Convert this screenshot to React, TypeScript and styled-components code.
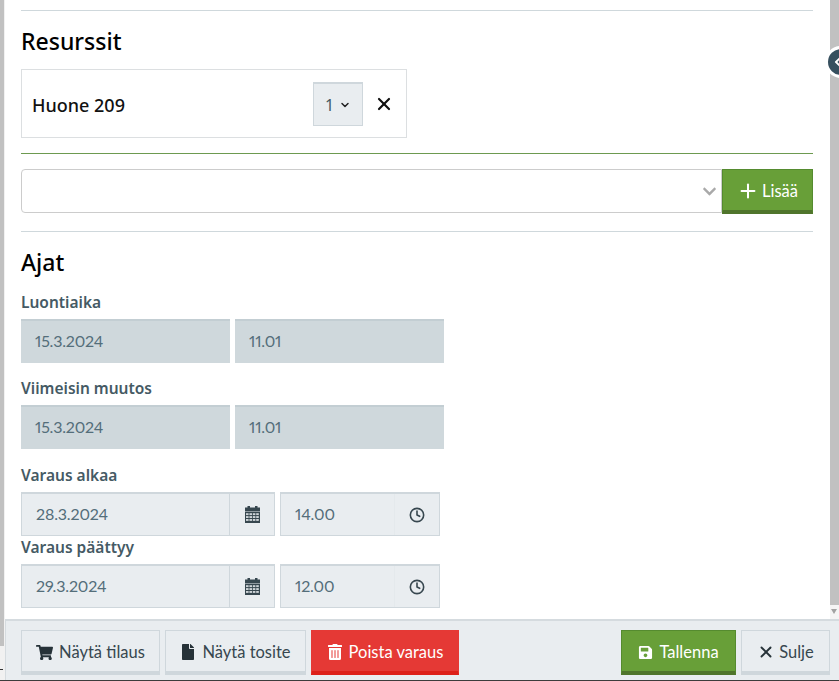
import React from 'react'
import styled, { createGlobalStyle } from 'styled-components'
import { FaShoppingCart, FaFile, FaTrashAlt, FaSave, FaChevronDown, FaChevronLeft } from 'react-icons/fa'
import { FiClock, FiX, FiPlus, FiChevronDown } from 'react-icons/fi'

const GlobalStyles = createGlobalStyle`
  html, body {
    margin: 0;
    padding: 0;
    height: 100%;
    overflow: hidden;
    background: #fff;
    font-family: "Noto Sans", "Open Sans", sans-serif;
  }
  #root { height: 100%; }
`

type Variant = 'default' | 'green' | 'red'

const variantColors = {
  default: { bg: '#e9edf0', border: '#cfd7dc', bottom: '#cfd7dc', text: '#37474f' },
  green: { bg: '#689f38', border: '#558b2f', bottom: '#50752c', text: '#fff' },
  red: { bg: '#e53935', border: '#e53935', bottom: '#dd2019', text: '#fff' },
}

function CalendarIcon() {
  const cells = []
  for (let row = 0; row < 3; row++) {
    for (let col = 0; col < 4; col++) {
      cells.push(<rect key={`${row}-${col}`} x={1 + col * 3.4} y={7.2 + row * 2.9} width={2.6} height={1.9} fill="#e9edf0" opacity={0.85} />)
    }
  }
  return (
    <svg width="15" height="17" viewBox="0 0 15 17" fill="#37474f">
      <rect x="2.5" y="0" width="2.5" height="3" />
      <rect x="10" y="0" width="2.5" height="3" />
      <rect x="0" y="1.5" width="15" height="4" />
      <rect x="0" y="6" width="15" height="11" />
      {cells}
    </svg>
  )
}

function DateTimeRow({ date, time }: { date: string; time: string }) {
  return (
    <FieldRow>
      <DateGroup>
        <EditValue>{date}</EditValue>
        <Addon $w={45}>
          <CalendarIcon />
        </Addon>
      </DateGroup>
      <TimeGroup>
        <EditValue>{time}</EditValue>
        <Addon $w={45} $plain>
          <FiClock size={16} strokeWidth={2.4} />
        </Addon>
      </TimeGroup>
    </FieldRow>
  )
}

export default function App(): JSX.Element {
  return (
    <Page>
      <GlobalStyles />
      <LeftEdge>
        <LeftThumb />
        <LeftMark />
      </LeftEdge>
      <Main>
        <Content>
          <Rule />
          <Heading $h={58}>Resurssit</Heading>
          <ResourceCard>
            <ResourceName>Huone 209</ResourceName>
            <QtyBox>
              1 <FiChevronDown size={12} strokeWidth={3} />
            </QtyBox>
            <RemoveIcon>
              <FiX size={20} strokeWidth={2.6} />
            </RemoveIcon>
          </ResourceCard>
          <Rule $green />
          <AddRow>
            <SelectBox>
              <FaChevronDown size={15} color="#a9a9a9" />
            </SelectBox>
            <Button $variant="green" $width={91} $gap={3}>
              <FiPlus size={22} strokeWidth={2.2} />
              Lisää
            </Button>
          </AddRow>
          <Rule />
          <Heading $h={62}>Ajat</Heading>
          <Label>Luontiaika</Label>
          <FieldRow>
            <ReadOnly>15.3.2024</ReadOnly>
            <ReadOnly>11.01</ReadOnly>
          </FieldRow>
          <Label $top={17}>Viimeisin muutos</Label>
          <FieldRow>
            <ReadOnly>15.3.2024</ReadOnly>
            <ReadOnly>11.01</ReadOnly>
          </FieldRow>
          <Label $top={18}>Varaus alkaa</Label>
          <DateTimeRow date="28.3.2024" time="14.00" />
          <Label $top={3}>Varaus päättyy</Label>
          <DateTimeRow date="29.3.2024" time="12.00" />
        </Content>
        <Footer>
          <Button $width={139}>
            <FaShoppingCart size={17} color="#263238" />
            Näytä tilaus
          </Button>
          <Button $width={141}>
            <FaFile size={16} color="#263238" />
            Näytä tosite
          </Button>
          <Button $variant="red" $width={148}>
            <FaTrashAlt size={16} />
            Poista varaus
          </Button>
          <FooterSpacer />
          <Button $variant="green" $width={115}>
            <FaSave size={15} />
            Tallenna
          </Button>
          <Button $width={89} $gap={4}>
            <FiX size={18} strokeWidth={2.5} color="#263238" />
            Sulje
          </Button>
        </Footer>
      </Main>
      <Scrollbar>
        <ScrollThumb />
        <ScrollArrow />
      </Scrollbar>
      <CollapseHandle>
        <FaChevronLeft size={12} color="#fff" />
      </CollapseHandle>
      <BottomLine />
    </Page>
  )
}

const Page = styled.div`
  position: relative;
  height: 681px;
  width: 839px;
  overflow: hidden;
  display: flex;
  background: #fff;
`

const LeftEdge = styled.div`
  width: 5px;
  flex: none;
  background: #f1f1f1;
  display: flex;
  flex-direction: column;
`

const LeftThumb = styled.div`
  width: 4px;
  height: 646px;
  background: #c1c1c1;
`

const LeftMark = styled.div`
  width: 3px;
  height: 1px;
  margin-top: 23px;
  background: #333;
`

const Main = styled.div`
  flex: 1;
  min-width: 0;
  display: flex;
  flex-direction: column;
  position: relative;
`

const Content = styled.div`
  flex: 1;
  padding: 10px 12px 0 16px;
`

const Rule = styled.div<{ $green?: boolean }>`
  height: 1px;
  width: 792px;
  background: ${({ $green }) => ($green ? '#6d9a50' : '#cfd8dc')};
`

const Heading = styled.h2<{ $h: number }>`
  margin: 0;
  box-sizing: border-box;
  height: ${({ $h }) => $h}px;
  padding-top: 15px;
  font-size: 23px;
  line-height: 30px;
  font-weight: 500;
  color: #000;
`

const ResourceCard = styled.div`
  box-sizing: border-box;
  width: 386px;
  height: 69px;
  border: 1px solid #dcdfe1;
  display: flex;
  align-items: center;
  padding: 1px 12px 0 10px;
  margin-bottom: 15px;
`

const ResourceName = styled.div`
  flex: 1;
  padding-top: 2px;
  font-size: 18px;
  font-weight: 500;
  color: #111;
`

const QtyBox = styled.div`
  box-sizing: border-box;
  width: 50px;
  height: 44px;
  background: #e9edf0;
  border: 1px solid #cfd7dc;
  border-top-width: 2px;
  display: flex;
  align-items: center;
  justify-content: center;
  gap: 5px;
  font-size: 16px;
  color: #455a64;
  margin-right: 11px;

  svg { color: #222; }
`

const RemoveIcon = styled.div`
  display: flex;
  color: #111;
`

const AddRow = styled.div`
  display: flex;
  width: 792px;
  margin-top: 15px;
  margin-bottom: 17px;
`

const SelectBox = styled.div`
  box-sizing: border-box;
  flex: 1;
  height: 44px;
  border: 1px solid #ccc;
  border-radius: 4px 0 0 4px;
  display: flex;
  align-items: center;
  justify-content: flex-end;
  padding-right: 4px;
`

const Button = styled.div<{ $variant?: Variant; $width: number; $gap?: number }>`
  box-sizing: border-box;
  width: ${({ $width }) => $width}px;
  height: 45px;
  flex: none;
  display: flex;
  align-items: center;
  justify-content: center;
  gap: ${({ $gap = 6 }) => $gap}px;
  padding-top: 2px;
  font-family: "Lato", "Noto Sans", sans-serif;
  font-size: 16.5px;
  color: ${({ $variant = 'default' }) => variantColors[$variant].text};
  background: ${({ $variant = 'default' }) => variantColors[$variant].bg};
  border: 1px solid ${({ $variant = 'default' }) => variantColors[$variant].border};
  border-bottom: 4px solid ${({ $variant = 'default' }) => variantColors[$variant].bottom};
`

const Label = styled.div<{ $top?: number }>`
  font-size: 15.5px;
  line-height: 17px;
  font-weight: 600;
  color: #455a64;
  margin-top: ${({ $top = 0 }) => $top}px;
  margin-bottom: 8px;
`

const FieldRow = styled.div`
  display: flex;
  gap: 5px;
  height: 44px;
`

const ReadOnly = styled.div`
  box-sizing: border-box;
  width: 209px;
  height: 44px;
  padding: 0 0 3px 14px;
  background: #cfd8dc;
  border-top: 2px solid #c3ced3;
  display: flex;
  align-items: center;
  font-family: "Lato", "Noto Sans", sans-serif;
  font-size: 16px;
  font-variant-numeric: proportional-nums;
  letter-spacing: -0.2px;
  color: #546e7a;
`

const DateGroup = styled.div`
  box-sizing: border-box;
  width: 254px;
  display: flex;
  background: #e9edf0;
  border: 1px solid #cfd7dc;
  border-top-width: 2px;
`

const TimeGroup = styled(DateGroup)`
  width: 160px;
`

const EditValue = styled.div`
  flex: 1;
  display: flex;
  align-items: center;
  padding: 0 0 3px 14px;
  font-family: "Lato", "Noto Sans", sans-serif;
  font-size: 16px;
  font-variant-numeric: proportional-nums;
  letter-spacing: -0.15px;
  color: #546e7a;
`

const Addon = styled.div<{ $w: number; $plain?: boolean }>`
  box-sizing: border-box;
  width: ${({ $w }) => $w}px;
  display: flex;
  align-items: center;
  justify-content: center;
  color: #37474f;
  border-left: 1px solid ${({ $plain }) => ($plain ? '#e4e9ec' : '#cfd7dc')};
`

const Footer = styled.div`
  box-sizing: border-box;
  height: 62px;
  flex: none;
  background: #e9edf0;
  border-top: 2px solid #d5dbdf;
  border-left: 1px solid #d5dbdf;
  display: flex;
  align-items: flex-start;
  gap: 5px;
  padding: 9px 9px 0 15px;
  margin-right: -9px;
`

const FooterSpacer = styled.div`
  flex: 1;
`

const Scrollbar = styled.div`
  width: 9px;
  height: 619px;
  flex: none;
  background: #fff;
  display: flex;
  flex-direction: column;
`

const ScrollThumb = styled.div`
  flex: 1;
  background: #c1c1c1;
`

const ScrollArrow = styled.div`
  height: 14px;
  background: #f5f5f5;
  position: relative;

  &::after {
    content: '';
    position: absolute;
    left: 1px;
    top: 4px;
    border: 3.5px solid transparent;
    border-top: 5px solid #a3a3a3;
  }
`

const CollapseHandle = styled.div`
  position: absolute;
  left: 825px;
  top: 46px;
  width: 32px;
  height: 32px;
  box-sizing: border-box;
  border-radius: 50%;
  background: #37505f;
  border: 3px solid #fff;
  display: flex;
  align-items: center;
  padding-left: 4px;
`

const BottomLine = styled.div`
  position: absolute;
  left: 0;
  right: 0;
  bottom: 0;
  height: 1px;
  background: #3c3c3c;
`
